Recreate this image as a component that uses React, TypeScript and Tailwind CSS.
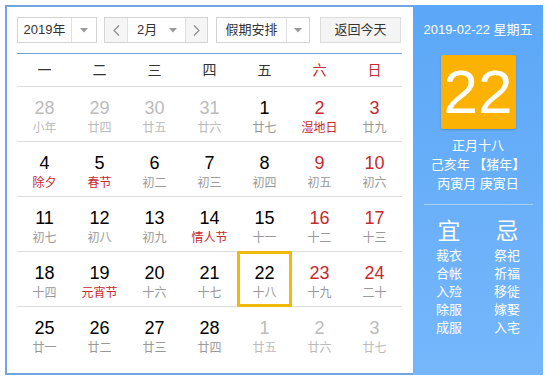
import React from 'react';

type Day = { n: number; lunar: string; muted?: boolean; redNum?: boolean; redLunar?: boolean; today?: boolean };

const weeks: Day[][] = [
  [
    { n: 28, lunar: '小年', muted: true },
    { n: 29, lunar: '廿四', muted: true },
    { n: 30, lunar: '廿五', muted: true },
    { n: 31, lunar: '廿六', muted: true },
    { n: 1, lunar: '廿七' },
    { n: 2, lunar: '湿地日', redNum: true, redLunar: true },
    { n: 3, lunar: '廿九', redNum: true },
  ],
  [
    { n: 4, lunar: '除夕', redLunar: true },
    { n: 5, lunar: '春节', redLunar: true },
    { n: 6, lunar: '初二' },
    { n: 7, lunar: '初三' },
    { n: 8, lunar: '初四' },
    { n: 9, lunar: '初五', redNum: true },
    { n: 10, lunar: '初六', redNum: true },
  ],
  [
    { n: 11, lunar: '初七' },
    { n: 12, lunar: '初八' },
    { n: 13, lunar: '初九' },
    { n: 14, lunar: '情人节', redLunar: true },
    { n: 15, lunar: '十一' },
    { n: 16, lunar: '十二', redNum: true },
    { n: 17, lunar: '十三', redNum: true },
  ],
  [
    { n: 18, lunar: '十四' },
    { n: 19, lunar: '元宵节', redLunar: true },
    { n: 20, lunar: '十六' },
    { n: 21, lunar: '十七' },
    { n: 22, lunar: '十八', today: true },
    { n: 23, lunar: '十九', redNum: true },
    { n: 24, lunar: '二十', redNum: true },
  ],
  [
    { n: 25, lunar: '廿一' },
    { n: 26, lunar: '廿二' },
    { n: 27, lunar: '廿三' },
    { n: 28, lunar: '廿四' },
    { n: 1, lunar: '廿五', muted: true },
    { n: 2, lunar: '廿六', muted: true },
    { n: 3, lunar: '廿七', muted: true },
  ],
];

const weekdays = ['一', '二', '三', '四', '五', '六', '日'];

const Caret = () => (
  <svg width="8" height="5" viewBox="0 0 8 5">
    <path d="M0 0 L8 0 L4 4.5 Z" fill="#999" />
  </svg>
);

const Chevron = ({ left }: { left?: boolean }) => (
  <svg width="7" height="11" viewBox="0 0 7 11">
    <path d={left ? 'M6 0.5 L1 5.5 L6 10.5' : 'M1 0.5 L6 5.5 L1 10.5'} fill="none" stroke="#888" strokeWidth="1.1" />
  </svg>
);

export default function App() {
  return (
    <div
      className="w-[547px] h-[381px] bg-white pl-[5px] pt-[5px]"
      style={{ fontFamily: '"Liberation Sans", "Noto Sans CJK SC", sans-serif' }}
    >
      <div className="flex w-[538px] h-[370px]">
        {/* calendar */}
        <div className="w-[408px] h-full border-l-2 border-t-2 border-b-2 border-[#6fa6e2] pl-[10px] pt-[10px]">
          <div className="flex h-[26px] text-[13px] text-[#333]">
            <div className="flex w-[80px] border border-[#d4d4d4] bg-white">
              <div className="flex-1 flex items-center justify-center">2019年</div>
              <div className="w-[25px] border-l border-[#e0e0e0] flex items-center justify-center">
                <Caret />
              </div>
            </div>
            <div className="flex w-[104px] ml-[7px] border border-[#d4d4d4]">
              <div className="w-[23px] bg-[#f5f5f5] border-r border-[#e0e0e0] flex items-center justify-center">
                <Chevron left />
              </div>
              <div className="flex-1 flex items-center justify-between pl-[9px] pr-[8px] bg-white">
                <span>2月</span>
                <Caret />
              </div>
              <div className="w-[22px] bg-[#f5f5f5] border-l border-[#e0e0e0] flex items-center justify-center">
                <Chevron />
              </div>
            </div>
            <div className="flex w-[94px] ml-[8px] border border-[#d4d4d4] bg-white">
              <div className="flex-1 flex items-center justify-center">假期安排</div>
              <div className="w-[23px] border-l border-[#e0e0e0] flex items-center justify-center">
                <Caret />
              </div>
            </div>
            <div className="w-[81px] ml-[10px] border border-[#dcdcdc] bg-[#f4f4f4] flex items-center justify-center">
              返回今天
            </div>
          </div>

          <div className="w-[385px] mt-[10px] border-t border-[#6fa6e2]">
            <div className="grid grid-cols-7 h-[33px] border-b border-[#dddddd] text-[14px]">
              {weekdays.map((w, i) => (
                <div key={w} className={`flex items-center justify-center ${i >= 5 ? 'text-[#c8282e]' : 'text-[#333]'}`}>
                  {w}
                </div>
              ))}
            </div>
            {weeks.map((week, wi) => (
              <div
                key={wi}
                className={`grid grid-cols-7 h-[55px] ${wi < weeks.length - 1 ? 'border-b border-[#dddddd]' : ''}`}
              >
                {week.map((d, di) => {
                  const numColor = d.muted ? 'text-[#bbbbbb]' : d.redNum ? 'text-[#c8282e]' : 'text-black';
                  const lunarColor = d.muted
                    ? 'text-[#bbbbbb]'
                    : d.redLunar
                    ? 'text-[#c8282e]'
                    : 'text-[#999999]';
                  return (
                    <div key={di} className="relative flex flex-col items-center pt-[10px]">
                      {d.today && (
                        <div className="absolute left-0 right-0 -top-px -bottom-px border-[3px] border-[#f2b90d]" />
                      )}
                      <div className={`text-[18px] leading-[22px] ${numColor}`}>{d.n}</div>
                      <div className={`text-[12px] leading-[16px] mt-px ${lunarColor}`}>{d.lunar}</div>
                    </div>
                  );
                })}
              </div>
            ))}
          </div>
        </div>

        {/* side panel */}
        <div className="w-[130px] h-full bg-gradient-to-b from-[#5ba7f7] to-[#76b7fb] flex flex-col items-center text-white">
          <div className="mt-[17px] text-[13px] leading-[16px]">2019-02-22 星期五</div>
          <div className="mt-[17px] w-[75px] h-[74px] rounded-[2px] bg-[#fcb202] shadow-[0_1px_2px_rgba(0,0,0,0.2)] flex items-center justify-center text-[62px] leading-none">
            22
          </div>
          <div className="mt-[7px] text-[13px] leading-[19px] text-center">
            <div>正月十八</div>
            <div>己亥年 【猪年】</div>
            <div>丙寅月 庚寅日</div>
          </div>
          <div className="mt-[11px] w-[109px] border-t border-[#a9d2fb]" />
          <div className="mt-[12px] flex gap-[32px]">
            {[
              { t: '宜', items: ['裁衣', '合帐', '入殓', '除服', '成服'] },
              { t: '忌', items: ['祭祀', '祈福', '移徙', '嫁娶', '入宅'] },
            ].map((col) => (
              <div key={col.t} className="flex flex-col items-center">
                <div className="text-[23px] leading-[28px]">{col.t}</div>
                <div className="mt-[2px] text-[13px] leading-[18px] flex flex-col items-center">
                  {col.items.map((it) => (
                    <div key={it}>{it}</div>
                  ))}
                </div>
              </div>
            ))}
          </div>
        </div>
      </div>
    </div>
  );
}
